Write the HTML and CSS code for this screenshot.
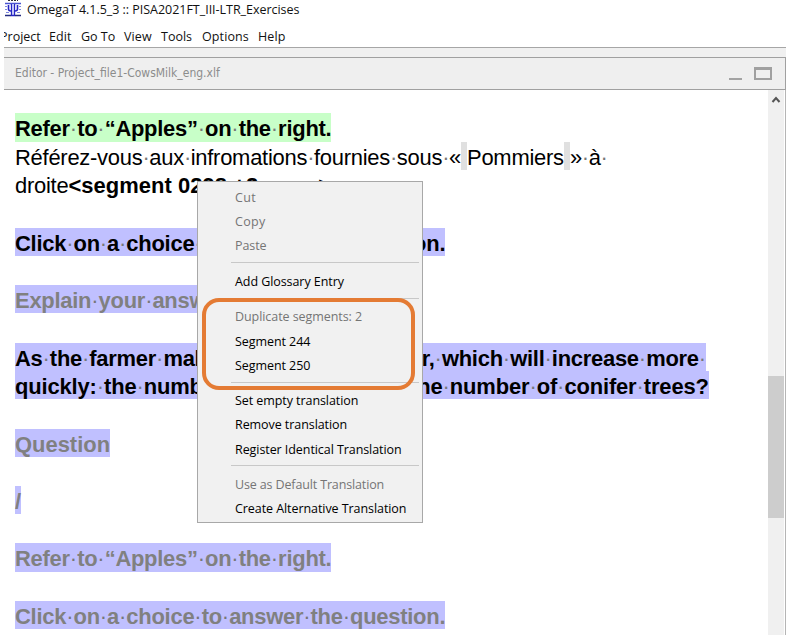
FILE: index.html
```html
<!DOCTYPE html>
<html lang="en">
<head>
<meta charset="utf-8">
<title>OmegaT</title>
<link rel="stylesheet" href="styles.css">
</head>
<body>
<div class="window">
  <header class="titlebar">
    <svg class="logo" width="18" height="18" viewBox="0 0 18 18" fill="none" stroke="#2525c4">
      <path d="M4 .5H14" stroke="#333" stroke-dasharray="2 1"/>
      <path d="M1 3.500H17" stroke-width="1.500" stroke="#4a55d0"/>
      <path d="M7.500 4V15.500H10.500V4" stroke-width="1.300" fill="#dfe3ff"/>
      <path d="M4.500 5V9Q4.500 11 7 11M13.500 5V9Q13.500 11 11 11" stroke-width="1.600"/>
      <path d="M1 6.500H3M1 9.500H3M15 6.500H17M15 9.500H17M2 12.500H5M13 12.500H16" stroke="#7d87dc"/>
      <path d="M1 15.500H7M11 15.500H17" stroke="#222b80" stroke-width="1.300"/>
    </svg>
    <span>OmegaT 4.1.5_3 :: PISA2021FT_III-LTR_Exercises</span>
  </header>
  <nav class="menubar">
    <span class="m-project">Project</span><span class="m-edit">Edit</span><span class="m-goto">Go To</span><span class="m-view">View</span><span class="m-tools">Tools</span><span class="m-options">Options</span><span class="m-help">Help</span>
  </nav>
  <section class="pane">
    <div class="pane-head">
      <span class="pane-title">Editor - Project_file1-CowsMilk_eng.xlf</span>
      <span class="min"></span><span class="max"></span>
    </div>
    <div class="pane-body">
      <main class="doc">
        <p><span class="seg active">Refer<i>·</i>to<i>·</i>“Apples”<i>·</i>on<i>·</i>the<i>·</i>right.</span></p>
        <p><span class="seg target">Référez-vous<i>·</i>aux<i>·</i>infromations<i>·</i>fournies<i>·</i>sous<i>·</i>«<b class="nbsp">&nbsp;</b>Pommiers<b class="nbsp">&nbsp;</b>»<i>·</i>à<i>·</i></span></p>
        <p class="last"><span class="seg target">droite<b class="marker">&lt;segment 0298 +2 more&gt;</b></span></p>
        <p class="last"><span class="seg">Click<i>·</i>on<i>·</i>a<i>·</i>choice<i>·</i>to<i>·</i>answer<i>·</i>the<i>·</i>question.</span></p>
        <p class="last"><span class="seg dim">Explain<i>·</i>your<i>·</i>answer.</span></p>
        <p><span class="seg">As<i>·</i>the<i>·</i>farmer<i>·</i>makes<i>·</i>the<i>·</i>orchard<i>·</i>bigger,<i>·</i>which<i>·</i>will<i>·</i>increase<i>·</i>more<i>·</i></span></p>
        <p class="last"><span class="seg loose">quickly:<i>·</i>the<i>·</i>number<i>·</i>of<i>·</i>apple<i>·</i>trees<i>·</i>or<i>·</i>the<i>·</i>number<i>·</i>of<i>·</i>conifer<i>·</i>trees?</span></p>
        <p class="last"><span class="seg dim single">Question</span></p>
        <p class="last"><span class="seg dim single">/</span></p>
        <p class="last"><span class="seg dim">Refer<i>·</i>to<i>·</i>“Apples”<i>·</i>on<i>·</i>the<i>·</i>right.</span></p>
        <p><span class="seg dim">Click<i>·</i>on<i>·</i>a<i>·</i>choice<i>·</i>to<i>·</i>answer<i>·</i>the<i>·</i>question.</span></p>
      </main>
      <div class="scroll">
        <svg width="16" height="18" viewBox="0 0 16 18"><path d="M4.500 12L8 8L11.500 12" fill="none" stroke="#555" stroke-width="2"/></svg>
        <div class="thumb"></div>
      </div>
    </div>
  </section>
</div>
<div class="popup">
  <div class="item off wide">Cut</div>
  <div class="item off wide">Copy</div>
  <div class="item off">Paste</div>
  <hr>
  <div class="item">Add Glossary Entry</div>
  <hr>
  <div class="item off">Duplicate segments: 2</div>
  <div class="item">Segment 244</div>
  <div class="item">Segment 250</div>
  <hr>
  <div class="item">Set empty translation</div>
  <div class="item">Remove translation</div>
  <div class="item">Register Identical Translation</div>
  <hr>
  <div class="item off tight">Use as Default Translation</div>
  <div class="item">Create Alternative Translation</div>
</div>
<div class="highlight"></div>
</body>
</html>
```
FILE: styles.css
```css
* { box-sizing: border-box; }
body { margin: 0; width: 786px; height: 643px; background: #fff; overflow: hidden; font: 12.5px "Open Sans", sans-serif; color: #111; }
.window { margin-left: 4px; height: 635px; display: flex; flex-direction: column; }
.titlebar { height: 22px; display: flex; align-items: flex-start; gap: 5px; line-height: 19px; letter-spacing: -0.03px; }
.logo { flex: none; }
.menubar { height: 25px; display: flex; line-height: 29px; overflow: hidden; white-space: nowrap; }
.menubar span { flex: none; }
.m-project { width: 45px; text-indent: -4px; }
.m-edit { width: 32px; letter-spacing: .1px; }
.m-goto { width: 43px; }
.m-view { width: 37px; letter-spacing: .1px; }
.m-tools { width: 41px; }
.m-options { width: 56px; letter-spacing: .1px; }
.m-help { letter-spacing: .15px; }
.pane { flex: 1; display: flex; flex-direction: column; border-top: 1px solid #a6a6a6; }
.pane::before { content: ""; height: 9px; background: #f0f0f0; }
.pane-head { height: 33px; display: flex; border: 1px solid #a0a0a0; border-left: 0; background: #efefef; }
.pane-title { flex: 1; padding-left: 11px; font: 12px/30px "DejaVu Sans Condensed", "DejaVu Sans", sans-serif; font-stretch: condensed; color: #8c8c8c; }
.min { width: 13px; height: 2px; margin: 20px 12px 0 0; background: #a3a3a3; }
.max { width: 18px; height: 13px; margin: 9px 13px 0 0; border: 2px solid #a0a0a0; border-top-width: 3px; }
.pane-body { flex: 1; display: flex; padding-right: 1px; border-right: 1px solid #b5b5b5; }
.doc { flex: 1; padding: 23px 0 0 11px; font: bold 21.95px/28.7px "Liberation Sans", Arial, sans-serif; color: #000; white-space: nowrap; }
.doc p { margin: 0; height: 28.7px; display: flex; }
.doc p.last { margin-bottom: 28.7px; }
.seg { height: 28.7px; padding-top: 2px; line-height: 28px; background: #c0c0ff; letter-spacing: -.25px; }
.doc .last .seg { height: 28.2px; }
.active { background: #c8ffc8; }
.seg.target { background: none; font-weight: normal; letter-spacing: -.25px; }
.loose { letter-spacing: -.15px; }
.single { letter-spacing: 0; }
.dim { color: #808080; }
.seg i { display: inline-block; width: 7.3px; font-style: normal; font-weight: normal; text-indent: 0; color: #777; letter-spacing: 0; }
.target i { width: 6.8px; }
.nbsp { display: inline-block; height: 28.7px; margin-top: -2px; vertical-align: top; background: #e0e0e0; font-weight: normal; letter-spacing: 0; }
.marker { letter-spacing: .05px; }
.scroll { width: 16px; background: #f0f0f0; }
.scroll svg { display: block; }
.thumb { height: 142px; margin-top: 268px; background: #cdcdcd; }
.popup { position: absolute; left: 197px; top: 181px; width: 226px; height: 342px; padding: 4px 3px 0 33px; border: 1px solid #a8a8a8; background: #f1f1f1; }
.item { height: 24.2px; padding-left: 4px; line-height: 24.8px; letter-spacing: -.07px; color: #000; white-space: nowrap; }
.off { color: #757575; }
.wide { letter-spacing: .35px; }
.tight { letter-spacing: -.14px; }
hr { height: 1px; margin: 3.7px 0 6.6px; border: 0; background: #c8c8c8; }
.highlight { position: absolute; left: 202px; top: 298px; width: 213px; height: 92px; border: 4px solid #e47b34; border-radius: 17px; }
```
